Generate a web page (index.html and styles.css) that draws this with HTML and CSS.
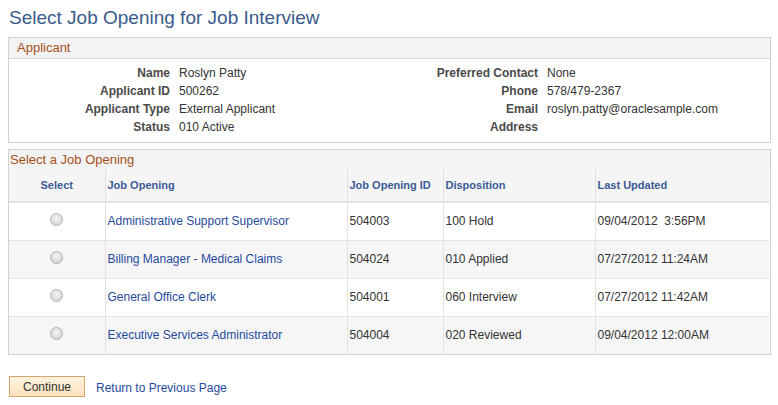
FILE: index.html
```html
<!DOCTYPE html>
<html>
<head>
<meta charset="utf-8">
<link rel="stylesheet" href="styles.css">
</head>
<body>
<div class="page">
  <h1 class="title">Select Job Opening for Job Interview</h1>

  <section class="group applicant">
    <div class="group-head">Applicant</div>
    <div class="applicant-body">
      <div class="fields fields-left">
        <span class="lbl">Name</span><span class="val">Roslyn Patty</span>
        <span class="lbl">Applicant ID</span><span class="val">500262</span>
        <span class="lbl">Applicant Type</span><span class="val">External Applicant</span>
        <span class="lbl">Status</span><span class="val">010 Active</span>
      </div>
      <div class="fields fields-right">
        <span class="lbl">Preferred Contact</span><span class="val">None</span>
        <span class="lbl">Phone</span><span class="val">578/479-2367</span>
        <span class="lbl">Email</span><span class="val">roslyn.patty@oraclesample.com</span>
        <span class="lbl">Address</span><span class="val"></span>
      </div>
    </div>
  </section>

  <section class="group openings">
    <div class="group-head small">Select a Job Opening</div>
    <table class="grid">
      <colgroup>
        <col class="w-sel">
        <col class="w-job">
        <col class="w-id">
        <col class="w-disp">
        <col class="w-upd">
      </colgroup>
      <thead>
        <tr>
          <th class="c-sel">Select</th>
          <th>Job Opening</th>
          <th>Job Opening ID</th>
          <th>Disposition</th>
          <th>Last Updated</th>
        </tr>
      </thead>
      <tbody>
        <tr>
          <td class="c-sel"><span class="radio"></span></td>
          <td><a href="#" class="link">Administrative Support Supervisor</a></td>
          <td>504003</td>
          <td>100 Hold</td>
          <td>09/04/2012&nbsp; 3:56PM</td>
        </tr>
        <tr class="alt">
          <td class="c-sel"><span class="radio"></span></td>
          <td><a href="#" class="link">Billing Manager - Medical Claims</a></td>
          <td>504024</td>
          <td>010 Applied</td>
          <td>07/27/2012 11:24AM</td>
        </tr>
        <tr>
          <td class="c-sel"><span class="radio"></span></td>
          <td><a href="#" class="link">General Office Clerk</a></td>
          <td>504001</td>
          <td>060 Interview</td>
          <td>07/27/2012 11:42AM</td>
        </tr>
        <tr class="alt">
          <td class="c-sel"><span class="radio"></span></td>
          <td><a href="#" class="link">Executive Services Administrator</a></td>
          <td>504004</td>
          <td>020 Reviewed</td>
          <td>09/04/2012 12:00AM</td>
        </tr>
      </tbody>
    </table>
  </section>

  <div class="actions">
    <button class="btn">Continue</button>
    <a href="#" class="link">Return to Previous Page</a>
  </div>
</div>
</body>
</html>
```

FILE: styles.css
```css
html, body {
  margin: 0;
  padding: 0;
  background: #ffffff;
}

body {
  font-family: Arial, "Liberation Sans", sans-serif;
  font-size: 12px;
  color: #333333;
}

.page {
  padding: 6px 8px 0 8px;
  width: 763px;
}

.title {
  margin: 0 0 0 1px;
  font-size: 19px;
  font-weight: normal;
  line-height: 24px;
  color: #3b5b8c;
}

.group {
  border: 1px solid #cfd2d4;
  background: #ffffff;
}

.applicant {
  margin-top: 7px;
}

.group-head {
  height: 20px;
  line-height: 20px;
  padding-left: 8px;
  font-size: 13px;
  color: #a94f1a;
  background: #f1f3f4;
  border-bottom: 1px solid #d6d9db;
}

.group-head.small {
  height: 18px;
  line-height: 19px;
  padding-left: 1px;
  border-bottom: none;
}

.applicant-body {
  display: flex;
  padding: 5px 0 6px 0;
}

.fields {
  display: grid;
  grid-auto-rows: 18px;
  align-items: center;
  column-gap: 9px;
}

.fields-left {
  grid-template-columns: 161px 221px;
}

.fields-right {
  grid-template-columns: 138px auto;
}

.lbl {
  text-align: right;
  font-weight: bold;
  color: #4a4a4a;
}

.val {
  color: #333333;
}

.openings {
  margin-top: 6px;
}

.grid {
  border-collapse: collapse;
  table-layout: fixed;
  width: 760px;
}

.w-sel { width: 96px; }
.w-job { width: 242px; }
.w-id { width: 96px; }
.w-disp { width: 152px; }
.w-upd { width: 174px; }

.grid th,
.grid td {
  box-sizing: border-box;
}

.grid th {
  height: 34px;
  text-align: left;
  font-size: 11px;
  font-weight: bold;
  color: #3b5b96;
  background: #f5f5f5;
  padding: 0 0 0 2px;
  border-left: 1px solid #e2e2e2;
  border-bottom: 2px solid #e4e4e4;
}

.grid td {
  height: 38px;
  padding: 0 0 0 2px;
  border-left: 1px solid #e2e2e2;
  border-bottom: 1px solid #e4e4e4;
  color: #333333;
}

.grid tbody tr:last-child td {
  border-bottom: none;
}

.grid th:first-child,
.grid td:first-child {
  border-left: none;
}

.grid tr.alt td {
  background: #f6f6f6;
}

.grid .c-sel {
  text-align: center;
  padding: 0;
}

.radio {
  display: inline-block;
  width: 11px;
  height: 11px;
  border-radius: 50%;
  border: 1px solid #b4b4b4;
  background: radial-gradient(circle at 50% 40%, #f4f4f4 0%, #dcdcdc 60%, #c4c4c4 100%);
  vertical-align: middle;
  position: relative;
  top: -2px;
}

.link {
  color: #1f4a9e;
  text-decoration: none;
}

.actions {
  display: flex;
  align-items: center;
  gap: 11px;
  margin-top: 21px;
  padding-left: 1px;
}

.btn {
  width: 76px;
  height: 21px;
  padding: 0;
  font-family: Arial, "Liberation Sans", sans-serif;
  font-size: 12px;
  color: #333333;
  border: 1px solid #d9a56f;
  background: linear-gradient(#fef3df, #fbe3bd);
  border-radius: 0;
}

.actions .link {
  position: relative;
  top: 1px;
}
```
